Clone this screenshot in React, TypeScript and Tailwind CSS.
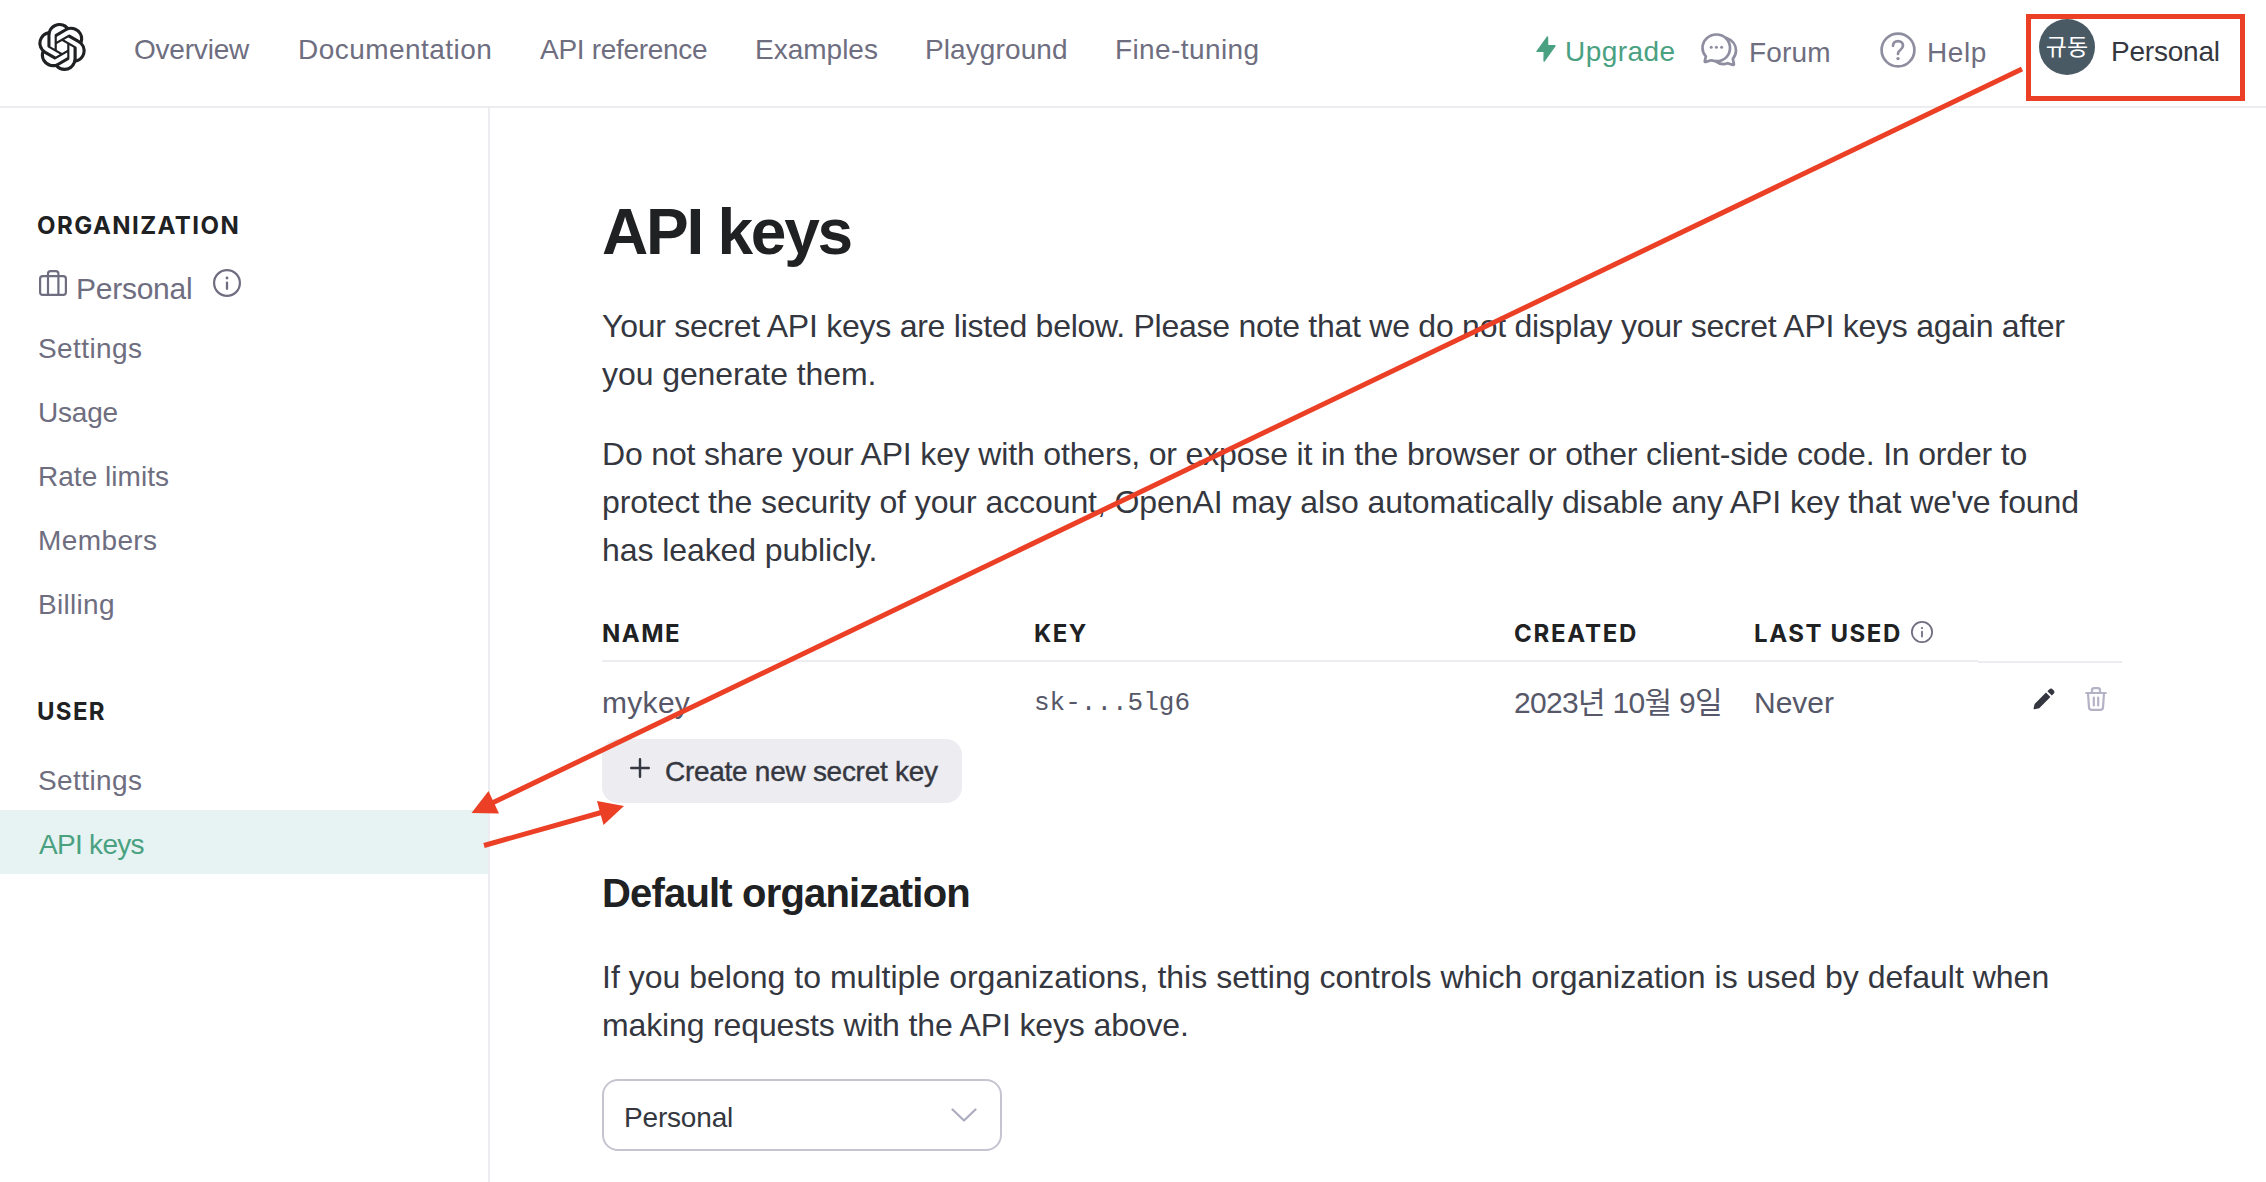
import { SiOpenai } from 'react-icons/si';

const NAV = [
  { label: 'Overview', cls: 'w-[164px] tracking-[-0.21px]' },
  { label: 'Documentation', cls: 'w-[242px] tracking-[0.45px]' },
  { label: 'API reference', cls: 'w-[215px] tracking-[-0.3px]' },
  { label: 'Examples', cls: 'w-[170px]' },
  { label: 'Playground', cls: 'w-[190px] tracking-[0.1px]' },
  { label: 'Fine-tuning', cls: 'w-[160px] tracking-[0.4px]' },
];

const ORG_LINKS = [
  { label: 'Settings', cls: 'tracking-[0.4px]' },
  { label: 'Usage', cls: 'tracking-[-0.2px]' },
  { label: 'Rate limits', cls: 'tracking-[0.03px]' },
  { label: 'Members', cls: 'tracking-[0.4px]' },
  { label: 'Billing', cls: 'tracking-[0.3px]' },
];

function InfoIcon({ className }: { className: string }) {
  return (
    <svg viewBox="0 0 28 28" fill="none" className={className}>
      <circle cx="14" cy="14" r="12.9" stroke="currentColor" strokeWidth="2.2" />
      <path d="M14 13.6v6.2" stroke="currentColor" strokeWidth="2.3" strokeLinecap="round" />
      <circle cx="14" cy="9" r="1.4" fill="currentColor" />
    </svg>
  );
}

function BriefcaseIcon() {
  return (
    <svg viewBox="0 0 28 26" fill="none" stroke="currentColor" strokeWidth="2.2" className="h-[26px] w-7">
      <rect x="1.1" y="6.2" width="25.8" height="18.6" rx="2.6" />
      <path d="M9 24.8V3.7A2.6 2.6 0 0 1 11.6 1.100h5.200A2.600 2.600 0 0 1 19.400 3.700V24.800" />
    </svg>
  );
}

function BoltIcon() {
  return (
    <svg viewBox="0 0 20 26" fill="currentColor" stroke="currentColor" strokeWidth="1.4" strokeLinejoin="round" className="h-[26px] w-5">
      <path d="M11.500 1 1 15.400h7.200L8.100 25 19 9.800h-7.400Z" />
    </svg>
  );
}

function ForumIcon() {
  return (
    <svg viewBox="0 0 37 34" fill="none" stroke="currentColor" strokeWidth="2.700" strokeLinecap="round" strokeLinejoin="round" className="h-[34px] w-[37px]">
      <path d="M15.500 1.500C7.600 1.500 1.500 7.600 1.500 15c0 3.400 1.300 6.200 3.400 8.400L3.800 28c-.2.800.3 1.200 1 .9l5.400-1.600c1.700.6 3.400.9 5.300.9C23.400 28.200 29 22.300 29 15S23.400 1.500 15.500 1.500Z" />
      <path d="M25.500 5c5.700 2 9.500 6.800 9.500 12.600 0 3.200-1.200 6-3.200 8.200l1.100 5.200c.1.700-.4 1.100-1 .9L26.600 30.200c-4.200 1.500-8.600.7-11.800-1.800" />
      <g fill="currentColor" stroke="none">
        <circle cx="10.200" cy="14.300" r="1.500" />
        <circle cx="15.400" cy="14.300" r="1.500" />
        <circle cx="20.600" cy="14.300" r="1.500" />
      </g>
    </svg>
  );
}

function HelpIcon() {
  return (
    <svg viewBox="0 0 36 36" fill="none" stroke="currentColor" strokeWidth="2.700" strokeLinecap="round" className="h-9 w-9">
      <circle cx="18" cy="18" r="16.400" />
      <path d="M13 13.800c0-2.900 2.100-4.700 5-4.700s5 1.800 5 4.500c0 2.200-1.200 3.300-2.700 4.400-1.500 1-2.300 1.900-2.300 3.600v.4" />
      <circle cx="18" cy="26.600" r="1.700" fill="currentColor" stroke="none" />
    </svg>
  );
}

function PencilIcon() {
  return (
    <svg viewBox="0 0 22 22" fill="currentColor" className="h-[22px] w-[22px]">
      <path d="M13 4.600 17.400 9 6.200 20.200 1.300 21.200a.6.6 0 0 1-.7-.7l1-4.600Z" />
      <path d="M14.400 3.200 16.200 1.500a2.500 2.500 0 0 1 3.600 0l.8.800a2.500 2.500 0 0 1 0 3.500L18.800 7.600Z" />
    </svg>
  );
}

function TrashIcon() {
  return (
    <svg viewBox="0 0 22 24" fill="none" stroke="currentColor" strokeWidth="2.200" strokeLinecap="round" strokeLinejoin="round" className="h-6 w-[22px]">
      <path d="M1.200 6h19.600M7 5.800V3.200C7 2 7.800 1.200 9 1.200h4c1.200 0 2 .8 2 2v2.600M3 6.200l1 14.200c.1 1.500 1 2.400 2.500 2.400h9c1.500 0 2.400-.9 2.500-2.400l1-14.200M8.800 10.500v8M13.200 10.500v8" />
    </svg>
  );
}

function Header() {
  return (
    <header className="flex h-[108px] items-start border-b-2 border-[#ececf1] pl-[38px]">
      <SiOpenai className="mt-[23px] h-12 w-12 text-[#202123]" />
      <nav className="ml-12 mt-[29px] flex text-[28px] leading-[42px] text-[#6e6e80]">
        {NAV.map((n) => (
          <a key={n.label} className={`shrink-0 whitespace-nowrap ${n.cls}`}>{n.label}</a>
        ))}
      </nav>
      <div className="ml-[261px] flex items-start whitespace-nowrap text-[28px] leading-[42px]">
        <a className="flex w-[165px] items-start text-[#4aa181]">
          <span className="mt-9"><BoltIcon /></span>
          <span className="ml-[9px] mt-[31px] tracking-[0.44px]">Upgrade</span>
        </a>
        <a className="flex w-[179px] items-start text-[#6e6e80]">
          <span className="mt-[33px] text-[#8e8ea0]"><ForumIcon /></span>
          <span className="ml-[11px] mt-8 tracking-[0.15px]">Forum</span>
        </a>
        <a className="flex w-[159px] items-start text-[#6e6e80]">
          <span className="mt-8 text-[#8e8ea0]"><HelpIcon /></span>
          <span className="ml-[11px] mt-8 tracking-[0.6px]">Help</span>
        </a>
        <a className="flex items-start text-[#353740]">
          <span className="mt-[19px] flex h-14 w-14 items-center justify-center rounded-full bg-[#495a64] pb-[3px] font-['Noto_Sans_CJK_KR',sans-serif] text-[23px] leading-none text-white">규동</span>
          <span className="ml-4 mt-[31px] tracking-[-0.22px]">Personal</span>
        </a>
      </div>
    </header>
  );
}

function SideHeading({ children, className }: { children: string; className: string }) {
  return <h3 className={`h-9 pl-[37px] font-['Inter',sans-serif] text-[24px] font-bold leading-[36px] text-[#202123] ${className}`}>{children}</h3>;
}

function Sidebar() {
  return (
    <aside className="w-[490px] shrink-0 border-r-2 border-[#ececf1] pt-[100px] text-[28px] text-[#6e6e80]">
      <SideHeading className="tracking-[1.46px]">ORGANIZATION</SideHeading>
      <div className="flex h-[70px] items-start pl-[39px]">
        <span className="mt-[26px]"><BriefcaseIcon /></span>
        <span className="ml-[9px] mt-[22px] text-[30px] leading-[45px] tracking-[-0.25px]">Personal</span>
        <InfoIcon className="ml-[21px] mt-[25px] h-7 w-7" />
      </div>
      {ORG_LINKS.map((l) => (
        <a key={l.label} className={`block h-16 pl-[38px] pt-[3px] leading-[64px] ${l.cls}`}>{l.label}</a>
      ))}
      <SideHeading className="mb-4 mt-[60px] tracking-[1.3px]">USER</SideHeading>
      <a className="block h-16 pl-[38px] pt-[3px] leading-[64px] tracking-[0.4px]">Settings</a>
      <a className="block h-16 bg-[#e7f3f2] pl-[39px] pt-[3px] leading-[64px] tracking-[-0.7px] text-[#4aa181]">API keys</a>
    </aside>
  );
}

function KeysTable() {
  const th = "font-['Inter',sans-serif] text-[24px] font-bold leading-[36px] text-[#202123]";
  return (
    <div className="mt-[42px] w-[1520px] whitespace-nowrap">
      <div className="flex">
        <div className="flex h-[46px] w-[1376px] border-b-2 border-[#ececf1]">
          <div className={`w-[432px] tracking-[1.5px] ${th}`}>NAME</div>
          <div className={`w-[480px] tracking-[1.4px] ${th}`}>KEY</div>
          <div className={`w-[240px] tracking-[1.75px] ${th}`}>CREATED</div>
          <div className={`flex items-start tracking-[1.57px] ${th}`}>
            LAST USED
            <InfoIcon className="ml-[9px] mt-[5px] h-[22px] w-[22px] text-[#6e6e80]" />
          </div>
        </div>
        <div className="h-[47px] w-[144px] border-b-2 border-[#ececf1]" />
      </div>
      <div className="flex h-[76px] items-start pt-[17px] text-[30px] leading-[45px] text-[#565869]">
        <div className="w-[432px] tracking-[0.3px]">mykey</div>
        <div className="w-[480px] pt-px font-['Liberation_Mono',monospace] text-[26px]">sk-...5lg6</div>
        <div className="w-[240px] font-['Liberation_Sans','Noto_Sans_CJK_KR',sans-serif] tracking-[-0.7px]">2023년 10월 9일</div>
        <div className="w-[279px]">Never</div>
        <span className="mt-2 text-[#353740]"><PencilIcon /></span>
        <span className="ml-[30px] mt-[7px] text-[#b4b2c5]"><TrashIcon /></span>
      </div>
    </div>
  );
}

function Main() {
  return (
    <main className="pl-[112px] pt-[84px] text-[32px] leading-[48px] text-[#353740]">
      <h1 className="text-[64px] font-bold leading-[80px] tracking-[-2.25px] text-[#202123]">API keys</h1>
      <p className="mt-[30px] whitespace-nowrap">
        <span className="block tracking-[-0.253px]">Your secret API keys are listed below. Please note that we do not display your secret API keys again after</span>
        <span className="block tracking-[-0.08px]">you generate them.</span>
      </p>
      <p className="mt-8 whitespace-nowrap">
        <span className="block tracking-[-0.165px]">Do not share your API key with others, or expose it in the browser or other client-side code. In order to</span>
        <span className="block tracking-[-0.087px]">protect the security of your account, OpenAI may also automatically disable any API key that we've found</span>
        <span className="block tracking-[-0.08px]">has leaked publicly.</span>
      </p>
      <KeysTable />
      <button className="flex h-16 w-[360px] items-start whitespace-nowrap rounded-2xl bg-[#ececf1] text-[28px] leading-[42px] tracking-[-0.28px] text-[#353740] [-webkit-text-stroke:0.4px_#353740]">
        <svg viewBox="0 0 20 20" stroke="currentColor" strokeWidth="2.400" strokeLinecap="round" className="ml-[28px] mt-[19px] h-5 w-5">
          <path d="M10 1.200v17.600M1.200 10h17.600" />
        </svg>
        <span className="ml-[15px] mt-3">Create new secret key</span>
      </button>
      <h2 className="mt-[66px] whitespace-nowrap text-[40px] font-bold leading-[48px] tracking-[-0.83px] text-[#202123]">Default organization</h2>
      <p className="mt-9 whitespace-nowrap">
        <span className="block tracking-[0.01px]">If you belong to multiple organizations, this setting controls which organization is used by default when</span>
        <span className="block tracking-[-0.14px]">making requests with the API keys above.</span>
      </p>
      <div className="mt-[30px] flex h-[72px] w-[400px] items-center justify-between rounded-2xl border-2 border-[#c5c5d2] pl-5 pr-[23px] text-[28px] leading-[42px]">
        <span className="mt-1.5 tracking-[-0.18px]">Personal</span>
        <svg viewBox="0 0 26 14" fill="none" strokeWidth="2.200" strokeLinecap="round" strokeLinejoin="round" className="h-[14px] w-[26px] stroke-[#acacbe]">
          <path d="M1.500 1.500 13 12.500 24.500 1.500" />
        </svg>
      </div>
    </main>
  );
}

/** Red callout box and arrows drawn over the page. */
function Annotations() {
  return (
    <svg viewBox="0 0 2266 1182" className="pointer-events-none absolute inset-0 h-[1182px] w-[2266px]" fill="#eb4026" stroke="none">
      <rect x="2028.500" y="16.500" width="214" height="82" fill="none" stroke="#eb4026" strokeWidth="5" />
      <path d="M2022 69 490 804M484 845.500 603 812" stroke="#eb4026" strokeWidth="5" />
      <path d="M471.500 813 488.500 791 499 813.500Z" />
      <path d="M624 806 597 801 603.500 825Z" />
    </svg>
  );
}

export default function App() {
  return (
    <div className="relative flex h-[1182px] w-[2266px] flex-col overflow-hidden bg-white font-['Liberation_Sans',Arial,sans-serif]">
      <Header />
      <div className="flex min-h-0 flex-1">
        <Sidebar />
        <Main />
      </div>
      <Annotations />
    </div>
  );
}
